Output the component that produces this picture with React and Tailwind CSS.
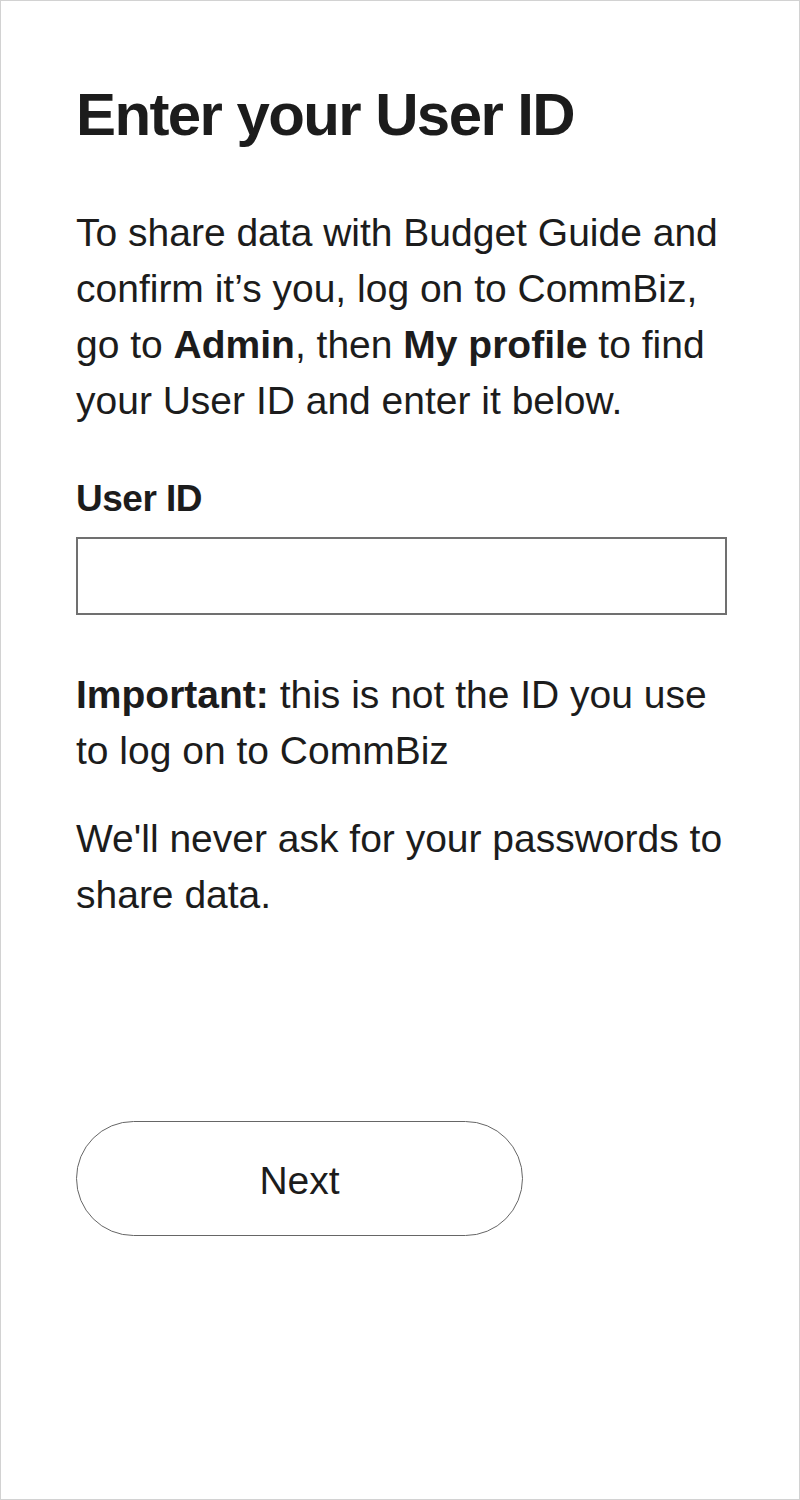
const App = () => {
  return (
    <div
      className="w-[800px] h-[1500px] bg-white border border-[#d2d2d2] text-[#1c1c1c]"
      style={{ fontFamily: '"Liberation Sans", Arial, sans-serif' }}
    >
      <div className="pl-[75px] pr-[74px] pt-[78px]">
        {/* Heading */}
        <h1 className="text-[60px] leading-[72px] font-bold tracking-[-1.6px]">
          Enter your User ID
        </h1>

        {/* Intro */}
        <p className="mt-[54px] text-[39px] leading-[56px]">
          To share data with Budget Guide and
          <br />
          confirm it’s you, log on to CommBiz,
          <br />
          go to <span className="font-bold">Admin</span>, then{" "}
          <span className="font-bold">My profile</span> to find
          <br />
          your User ID and enter it below.
        </p>

        {/* Field */}
        <label className="block mt-[48px] text-[37px] leading-[44px] font-bold tracking-[-0.5px]">
          User ID
        </label>
        <input
          type="text"
          className="block mt-[16px] w-[651px] h-[78px] border-2 border-[#707070] bg-white outline-none px-4 text-[39px]"
        />

        {/* Notes */}
        <p className="mt-[52px] text-[39px] leading-[56px]">
          <span className="font-bold">Important:</span> this is not the ID you use
          <br />
          to log on to CommBiz
        </p>
        <p className="mt-[32px] text-[39px] leading-[56px]">
          We'll never ask for your passwords to
          <br />
          share data.
        </p>

        {/* Action */}
        <button
          type="button"
          className="mt-[198px] w-[447px] h-[115px] rounded-full border-[1.5px] border-[#666666] bg-white text-[39px] leading-none pt-[3px] flex items-center justify-center"
        >
          Next
        </button>
      </div>
    </div>
  );
};

export default App;
